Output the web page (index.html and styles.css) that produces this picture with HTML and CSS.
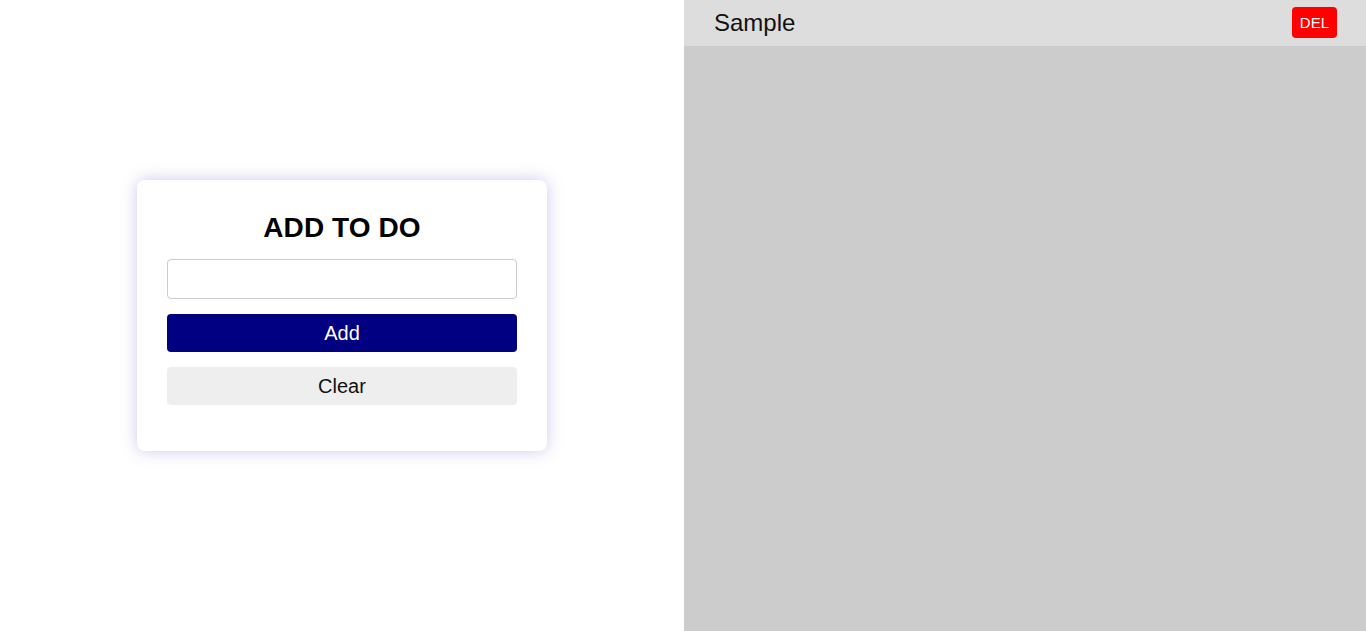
FILE: index.html
```html
<!DOCTYPE html>
<html>
<head>
<meta charset="utf-8">
<link rel="stylesheet" href="styles.css">
</head>
<body>
<div class="app">
  <section class="left">
    <div class="card">
      <h2 class="title">ADD TO DO</h2>
      <input class="field" type="text">
      <button class="btn btn-add">Add</button>
      <button class="btn btn-clear">Clear</button>
    </div>
  </section>
  <section class="right">
    <div class="item">
      <span class="item-text">Sample</span>
      <button class="del">DEL</button>
    </div>
  </section>
</div>
</body>
</html>
```
FILE: styles.css
```css
* { box-sizing: border-box; }
html, body { margin: 0; padding: 0; height: 100%; }
body { font-family: "Liberation Sans", Arial, sans-serif; }
.app { display: grid; grid-template-columns: 684px 1fr; height: 631px; }
.left { background: #fff; display: flex; align-items: center; justify-content: center; }
.card {
  width: 410px;
  height: 271px;
  padding: 30px 30px 0;
  background: #fff;
  border-radius: 8px;
  box-shadow: 0 0 16px rgba(110, 100, 210, 0.35);
  display: flex;
  flex-direction: column;
}
.title { margin: 2px 0 15px; font-size: 28px; font-weight: bold; text-align: center; line-height: 32px; color: #000; letter-spacing: 0.1px; }
.field { height: 40px; width: 100%; border: 1px solid #ccc; border-radius: 4px; margin: 0 0 15px; font-size: 18px; }
.btn { height: 38px; width: 100%; border: none; border-radius: 4px; font-family: "Liberation Sans", Arial, sans-serif; font-size: 20px; }
.btn-add { background: #000080; color: #fff; margin-bottom: 15px; }
.btn-clear { background: #eee; color: #111; }
.right { background: #ccc; }
.item { height: 46px; background: #ddd; display: flex; align-items: center; justify-content: space-between; padding: 0 29px 0 30px; }
.item-text { font-size: 24px; color: #111; }
.del { background: #f00; color: #fff; border: none; border-radius: 4px; font-family: "Liberation Sans", Arial, sans-serif; font-size: 15px; height: 31px; padding: 0 8px; margin-top: -1px; }
```
